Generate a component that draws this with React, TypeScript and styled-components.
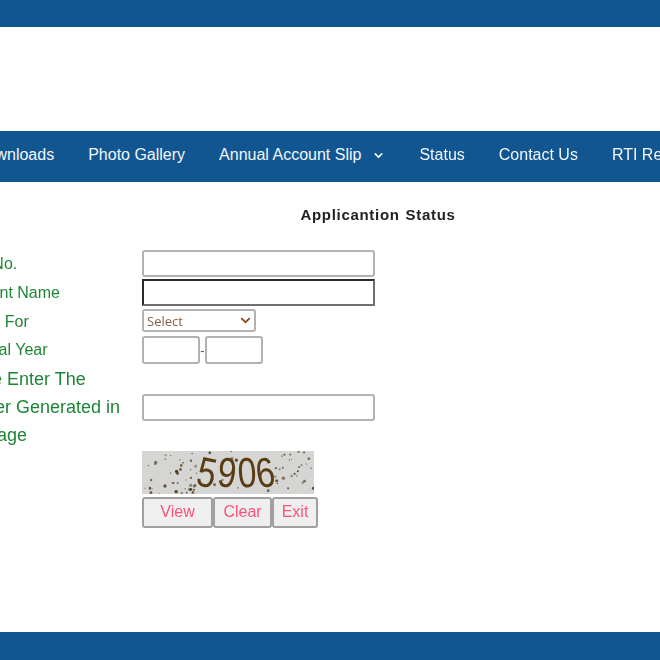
import React from 'react';
import styled, { createGlobalStyle } from 'styled-components';
import { FiChevronDown } from 'react-icons/fi';
import { FaChevronDown } from 'react-icons/fa';

const GlobalStyle = createGlobalStyle`
  html, body {
    margin: 0;
    padding: 0;
    background: #ffffff;
    overflow: hidden;
  }
  body {
    font-family: "Liberation Sans", Arial, sans-serif;
  }
`;

const Viewport = styled.div`
  width: 660px;
  height: 660px;
  overflow: hidden;
  filter: blur(0.35px);
`;

const Page = styled.div`
  width: 900px;
  height: 660px;
  margin-left: -72px;
  display: flex;
  flex-direction: column;
`;

const TopBar = styled.div`
  height: 27px;
  background: #125691;
`;

const LogoSpace = styled.div`
  height: 104px;
`;

const NavBar = styled.nav`
  height: 51px;
  flex: none;
  background: #125691;
  display: flex;
  align-items: center;
  gap: 34px;
  padding-left: 47px;
  padding-bottom: 3px;
  box-sizing: border-box;
`;

const NavItem = styled.a`
  color: #f2f6fa;
  font-size: 16px;
  white-space: nowrap;
  display: flex;
  align-items: center;
  gap: 11px;
`;

const Main = styled.main`
  flex: 1;
  display: flex;
  flex-direction: column;
`;

const Title = styled.h2`
  margin: 24px 0 27px;
  font-size: 15px;
  line-height: 17px;
  font-weight: 700;
  letter-spacing: 0.7px;
  word-spacing: 1px;
  color: #222222;
  text-align: center;
`;

const Form = styled.form`
  display: grid;
  grid-template-columns: 214px 1fr;
  align-items: center;
`;

const Label = styled.label`
  padding-left: 19px;
  padding-bottom: 2px;
  color: #1f8536;
  font-size: 16px;
  line-height: 18px;
`;

const LargeLabel = styled(Label)`
  margin-top: -1px;
  padding-bottom: 1px;
  font-size: 18px;
  line-height: 28px;
`;

const Field = styled.div<{ $gap?: number }>`
  display: flex;
  align-items: center;
  padding-bottom: ${(p) => p.$gap ?? 2}px;
`;

const TextInput = styled.input<{ $focused?: boolean; $width?: number; $tall?: boolean }>`
  box-sizing: border-box;
  width: ${(p) => p.$width ?? 233}px;
  height: ${(p) => (p.$tall ? 28 : 27)}px;
  background: #ffffff;
  border: 2px solid;
  border-color: ${(p) => (p.$focused ? '#2b2b2b #6f6f6f #6f6f6f #2b2b2b' : '#b2b2b2')};
  border-radius: ${(p) => (p.$focused ? 1 : 3)}px;
  outline: none;
  padding: 0 4px;
`;

const SelectWrap = styled.div`
  position: relative;
  width: 114px;
  height: 23px;
  color: #8a4b1f;

  svg {
    position: absolute;
    right: 5px;
    top: 6px;
    pointer-events: none;
  }
`;

const Select = styled.select`
  box-sizing: border-box;
  width: 100%;
  height: 100%;
  padding: 0 0 0 3px;
  appearance: none;
  background: #ffffff;
  border: 2px solid #b2b2b2;
  border-radius: 3px;
  color: #8a5f45;
  font-family: "Open Sans", sans-serif;
  font-size: 13px;
  outline: none;
`;

const Dash = styled.span`
  width: 5px;
  text-align: center;
  color: #2a5f8f;
  font-size: 13px;
`;

const Captcha = styled.svg`
  display: block;
  width: 172px;
  height: 43px;
`;

const CaptchaCell = styled.div`
  grid-column: 2;
  margin-top: 1px;
  display: flex;
  flex-direction: column;
  align-items: flex-start;
  gap: 3px;
`;

const Buttons = styled.div`
  display: flex;
`;

const Button = styled.button<{ $width: number }>`
  box-sizing: border-box;
  width: ${(p) => p.$width}px;
  height: 31px;
  padding: 0 0 2px;
  background: #efefef;
  border: 2px solid #a0a0a0;
  border-radius: 3px;
  color: #fb5279;
  font-family: "Liberation Sans", Arial, sans-serif;
  font-size: 16px;
`;

const Footer = styled.footer`
  height: 28px;
  background: #125691;
`;

// fixed noise so the captcha looks the same on every load
const noise = (() => {
  const dots: { x: number; y: number; r: number; o: number }[] = [];
  let seed = 5906;
  const next = () => {
    seed = (seed * 16807) % 2147483647;
    return seed / 2147483647;
  };
  for (let i = 0; i < 130; i++) {
    const dot = { x: next() * 172, y: next() * 43, r: 0.6 + next() * 1.1, o: 0.35 + next() * 0.6 };
    // the digits sit on a mostly clean patch
    if (dot.x > 55 && dot.x < 132 && next() < 0.85) continue;
    dots.push(dot);
  }
  return dots;
})();

const digits = [
  { ch: '5', x: 65, a: 12 },
  { ch: '9', x: 85, a: 6 },
  { ch: '0', x: 105, a: -4 },
  { ch: '6', x: 123, a: -10 },
];

const navItems = ['Downloads', 'Photo Gallery'];

const App = () => {
  return (
    <Viewport>
      <GlobalStyle />
      <Page>
        <TopBar />
        <LogoSpace />
        <NavBar>
          {navItems.map((item) => (
            <NavItem key={item}>{item}</NavItem>
          ))}
          <NavItem>
            Annual Account Slip
            <FiChevronDown size={13} strokeWidth={3} />
          </NavItem>
          <NavItem>Status</NavItem>
          <NavItem>Contact Us</NavItem>
          <NavItem>RTI Request</NavItem>
        </NavBar>
        <Main>
          <Title>Applicantion Status</Title>
          <Form>
            <Label>Appln No.</Label>
            <Field>
              <TextInput />
            </Field>
            <Label>Applicant Name</Label>
            <Field $gap={3}>
              <TextInput $focused />
            </Field>
            <Label>Applied For</Label>
            <Field $gap={4}>
              <SelectWrap>
                <Select defaultValue="">
                  <option value="">Select</option>
                </Select>
                <FaChevronDown size={11} />
              </SelectWrap>
            </Field>
            <Label>Financial Year</Label>
            <Field>
              <TextInput $width={58} $tall />
              <Dash>-</Dash>
              <TextInput $width={58} $tall />
            </Field>
            <LargeLabel>
              Please Enter The
              <br />
              Number Generated in
              <br />
              the Image
            </LargeLabel>
            <Field>
              <TextInput />
            </Field>
            <CaptchaCell>
              <Captcha viewBox="0 0 172 43">
                <rect width="172" height="43" fill="#d5d5d3" />
                {noise.map((d, i) => (
                  <circle key={i} cx={d.x} cy={d.y} r={d.r} fill="#4a3418" opacity={d.o} />
                ))}
                {digits.map((d) => (
                  <text
                    key={d.ch}
                    transform={`translate(${d.x} 21) rotate(${d.a}) scale(0.8 1)`}
                    y="15"
                    textAnchor="middle"
                    fontFamily="Liberation Sans"
                    fontSize="42"
                    fill="#5a3c12"
                  >
                    {d.ch}
                  </text>
                ))}
              </Captcha>
              <Buttons>
                <Button type="button" $width={71}>View</Button>
                <Button type="button" $width={59}>Clear</Button>
                <Button type="button" $width={46}>Exit</Button>
              </Buttons>
            </CaptchaCell>
          </Form>
        </Main>
        <Footer />
      </Page>
    </Viewport>
  );
};

export default App;
